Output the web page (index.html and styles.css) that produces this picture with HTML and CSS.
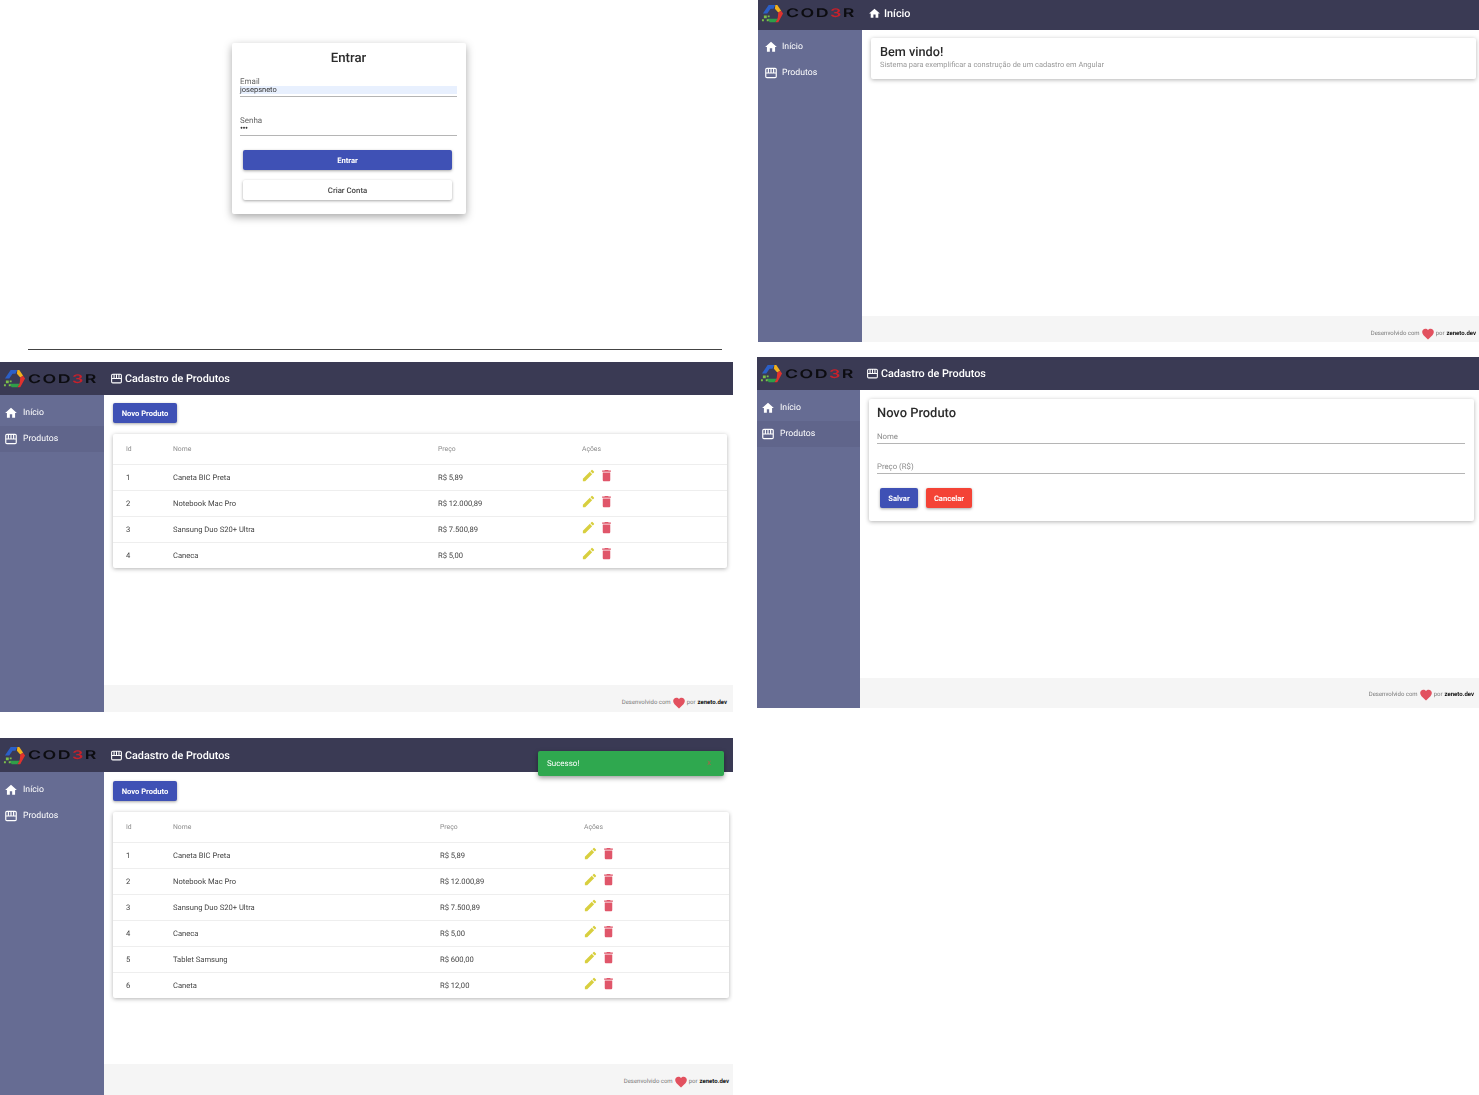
FILE: index.html
```html
<!DOCTYPE html>
<html lang="pt-BR">
<head>
<meta charset="utf-8">
<title>Cadastro de Produtos</title>
<link rel="stylesheet" href="styles.css">
</head>
<body>
<svg class="defs" width="0" height="0" aria-hidden="true">
  <symbol id="i-home" viewBox="0 0 24 24"><path d="M10 20v-6h4v6h5v-8h3L12 3 2 12h3v8z"/></symbol>
  <symbol id="i-store" viewBox="0 0 24 24"><path fill-rule="evenodd" d="M5 3h14a3 3 0 0 1 3 3v12a3 3 0 0 1-3 3H5a3 3 0 0 1-3-3V6a3 3 0 0 1 3-3z M4 13v5a1 1 0 0 0 1 1h14a1 1 0 0 0 1-1v-5z M4 11h2.500V5H5a1 1 0 0 0-1 1z M8.500 11H11V5H8.500z M13 11h2.500V5H13z M17.500 11H20V6a1 1 0 0 0-1-1h-1.500z"/></symbol>
  <symbol id="i-edit" viewBox="0 0 24 24"><path d="M3 17.250V21h3.750L17.810 9.940l-3.750-3.750zM20.710 7.040a1 1 0 0 0 0-1.410l-2.340-2.340a1 1 0 0 0-1.410 0l-1.830 1.830 3.750 3.750z"/></symbol>
  <symbol id="i-trash" viewBox="0 0 24 24"><path d="M6 19c0 1.100.9 2 2 2h8c1.100 0 2-.9 2-2V7H6zM19 4h-3.500l-1-1h-5l-1 1H5v2h14z"/></symbol>
  <symbol id="i-heart" viewBox="0 0 24 24"><path d="M12 21.350l-1.450-1.320C5.400 15.360 2 12.280 2 8.500 2 5.420 4.420 3 7.500 3c1.740 0 3.410.810 4.500 2.090C13.090 3.810 14.760 3 16.500 3 19.580 3 22 5.420 22 8.500c0 3.780-3.400 6.860-8.550 11.540z"/></symbol>
  <symbol id="i-logo" viewBox="0 0 24 24">
    <path fill="#2b5fc7" d="M2 12 8 3h7l-2 4H10l-3.500 5z"/>
    <path fill="#f2b21c" d="M15 3h2l4 6-3 2-3.500-4z"/>
    <path fill="#e0322e" d="M21 9l2 3-5 9h-3l2.500-4.500L18 11z"/>
    <path fill="#2f9e48" d="M15 21H9l-2-3.500h10.500z"/>
    <path fill="#7cc04a" d="M3 14h3v3H3zM6 18h2v2H6zM1 18h2v2H1zM7 14h2v2H7z"/>
  </symbol>
</svg>

<main class="canvas">
  <section class="login-panel">
    <div class="login-card">
      <h1 class="login-title">Entrar</h1>
      <div class="field field-filled"><span class="field-label">Email</span><span class="field-value field-autofill">josepsneto</span></div>
      <div class="field field-filled field-gap"><span class="field-label">Senha</span><span class="field-value field-dots">•••</span></div>
      <button class="btn btn-primary btn-wide">Entrar</button>
      <button class="btn btn-white btn-wide">Criar Conta</button>
    </div>
  </section>

  <hr class="rule">

  <section class="app app-home">
    <header class="topbar topbar-home">
      <a class="logo"><svg class="logo-mark"><use href="#i-logo"/></svg><span class="logo-text">COD<b>3</b>R</span></a>
      <h2 class="top-title"><svg class="ic-top"><use href="#i-home"/></svg>Início</h2>
    </header>
    <div class="app-body">
      <nav class="side side-home"><a class="side-link"><svg class="ic-side"><use href="#i-home"/></svg>Início</a><a class="side-link"><svg class="ic-side"><use href="#i-store"/></svg>Produtos</a></nav>
      <div class="content">
        <div class="main">
          <div class="card welcome"><h3 class="welcome-title">Bem vindo!</h3><p class="welcome-sub">Sistema para exemplificar a construção de um cadastro em Angular</p></div>
        </div>
        <footer class="foot">Desenvolvido com <svg class="heart"><use href="#i-heart"/></svg> por <strong>zeneto.dev</strong></footer>
      </div>
    </div>
  </section>

  <section class="app app-list1">
    <header class="topbar">
      <a class="logo"><svg class="logo-mark"><use href="#i-logo"/></svg><span class="logo-text">COD<b>3</b>R</span></a>
      <h2 class="top-title"><svg class="ic-top"><use href="#i-store"/></svg>Cadastro de Produtos</h2>
    </header>
    <div class="app-body">
      <nav class="side"><a class="side-link"><svg class="ic-side"><use href="#i-home"/></svg>Início</a><a class="side-link side-active"><svg class="ic-side"><use href="#i-store"/></svg>Produtos</a></nav>
      <div class="content">
        <div class="main">
          <button class="btn btn-primary btn-new">Novo Produto</button>
          <div class="card table-card">
            <div class="row row-head"><span>Id</span><span>Nome</span><span>Preço</span><span>Ações</span></div>
            <div class="row"><span>1</span><span>Caneta BIC Preta</span><span>R$ 5,89</span><span class="acts"><svg class="ic-edit"><use href="#i-edit"/></svg><svg class="ic-trash"><use href="#i-trash"/></svg></span></div>
            <div class="row"><span>2</span><span>Notebook Mac Pro</span><span>R$ 12.000,89</span><span class="acts"><svg class="ic-edit"><use href="#i-edit"/></svg><svg class="ic-trash"><use href="#i-trash"/></svg></span></div>
            <div class="row"><span>3</span><span>Sansung Duo S20+ Ultra</span><span>R$ 7.500,89</span><span class="acts"><svg class="ic-edit"><use href="#i-edit"/></svg><svg class="ic-trash"><use href="#i-trash"/></svg></span></div>
            <div class="row"><span>4</span><span>Caneca</span><span>R$ 5,00</span><span class="acts"><svg class="ic-edit"><use href="#i-edit"/></svg><svg class="ic-trash"><use href="#i-trash"/></svg></span></div>
          </div>
        </div>
        <footer class="foot">Desenvolvido com <svg class="heart"><use href="#i-heart"/></svg> por <strong>zeneto.dev</strong></footer>
      </div>
    </div>
  </section>

  <section class="app app-form">
    <header class="topbar">
      <a class="logo"><svg class="logo-mark"><use href="#i-logo"/></svg><span class="logo-text">COD<b>3</b>R</span></a>
      <h2 class="top-title"><svg class="ic-top"><use href="#i-store"/></svg>Cadastro de Produtos</h2>
    </header>
    <div class="app-body">
      <nav class="side side-form"><a class="side-link"><svg class="ic-side"><use href="#i-home"/></svg>Início</a><a class="side-link side-active"><svg class="ic-side"><use href="#i-store"/></svg>Produtos</a></nav>
      <div class="content">
        <div class="main">
          <div class="card form-card">
            <h3 class="form-title">Novo Produto</h3>
            <div class="field form-field"><span class="placeholder">Nome</span></div>
            <div class="field form-field form-field-2"><span class="placeholder">Preço (R$)</span></div>
            <div class="form-actions"><button class="btn btn-primary btn-save">Salvar</button><button class="btn btn-red btn-cancel">Cancelar</button></div>
          </div>
        </div>
        <footer class="foot">Desenvolvido com <svg class="heart"><use href="#i-heart"/></svg> por <strong>zeneto.dev</strong></footer>
      </div>
    </div>
  </section>

  <section class="app app-list2">
    <header class="topbar">
      <a class="logo"><svg class="logo-mark"><use href="#i-logo"/></svg><span class="logo-text">COD<b>3</b>R</span></a>
      <h2 class="top-title"><svg class="ic-top"><use href="#i-store"/></svg>Cadastro de Produtos</h2>
    </header>
    <div class="app-body">
      <nav class="side"><a class="side-link"><svg class="ic-side"><use href="#i-home"/></svg>Início</a><a class="side-link"><svg class="ic-side"><use href="#i-store"/></svg>Produtos</a></nav>
      <div class="content">
        <div class="main">
          <button class="btn btn-primary btn-new">Novo Produto</button>
          <div class="card table-card">
            <div class="row row-head"><span>Id</span><span>Nome</span><span>Preço</span><span>Ações</span></div>
            <div class="row"><span>1</span><span>Caneta BIC Preta</span><span>R$ 5,89</span><span class="acts"><svg class="ic-edit"><use href="#i-edit"/></svg><svg class="ic-trash"><use href="#i-trash"/></svg></span></div>
            <div class="row"><span>2</span><span>Notebook Mac Pro</span><span>R$ 12.000,89</span><span class="acts"><svg class="ic-edit"><use href="#i-edit"/></svg><svg class="ic-trash"><use href="#i-trash"/></svg></span></div>
            <div class="row"><span>3</span><span>Sansung Duo S20+ Ultra</span><span>R$ 7.500,89</span><span class="acts"><svg class="ic-edit"><use href="#i-edit"/></svg><svg class="ic-trash"><use href="#i-trash"/></svg></span></div>
            <div class="row"><span>4</span><span>Caneca</span><span>R$ 5,00</span><span class="acts"><svg class="ic-edit"><use href="#i-edit"/></svg><svg class="ic-trash"><use href="#i-trash"/></svg></span></div>
            <div class="row"><span>5</span><span>Tablet Samsung</span><span>R$ 600,00</span><span class="acts"><svg class="ic-edit"><use href="#i-edit"/></svg><svg class="ic-trash"><use href="#i-trash"/></svg></span></div>
            <div class="row"><span>6</span><span>Caneta</span><span>R$ 12,00</span><span class="acts"><svg class="ic-edit"><use href="#i-edit"/></svg><svg class="ic-trash"><use href="#i-trash"/></svg></span></div>
          </div>
        </div>
        <footer class="foot">Desenvolvido com <svg class="heart"><use href="#i-heart"/></svg> por <strong>zeneto.dev</strong></footer>
      </div>
    </div>
    <div class="toast"><span>Sucesso!</span><span class="toast-x">X</span></div>
  </section>
</main>
</body>
</html>
```

FILE: styles.css
```css
* { box-sizing: border-box; }
html, body { margin: 0; padding: 0; background: #fff; }
body { font-family: Roboto, "Liberation Sans", sans-serif; color: #333; overflow: hidden; text-rendering: geometricPrecision; }
.defs { position: absolute; }
.canvas { position: relative; width: 1479px; height: 1095px; overflow: hidden; filter: blur(.25px); }

/* Panels sit on a free canvas: the collage placement is the content */
.login-panel { position: absolute; left: 232px; top: 43px; width: 234px; }
.rule { position: absolute; left: 28px; top: 349px; width: 694px; margin: 0; border: 0; border-top: 1px solid #444; }
.app { position: absolute; display: flex; flex-direction: column; overflow: hidden; }
.app-home { left: 758px; top: 0; width: 721px; height: 342px; }
.app-list1 { left: 0; top: 362px; width: 733px; height: 350px; }
.app-form { left: 757px; top: 357px; width: 722px; height: 351px; }
.app-list2 { left: 0; top: 738px; width: 733px; height: 357px; }

/* Login */
.login-card { background: #fff; border-radius: 2px; padding: 7px 9px 14px 8px; height: 171px; display: flex; flex-direction: column; box-shadow: 0 3px 8px rgba(0,0,0,.35); }
.login-title { margin: 0; text-align: center; font-size: 13.200px; line-height: 17px; font-weight: 500; color: #2b2b2b; }
.field { display: flex; flex-direction: column; border-bottom: 1px solid #b5b5b5; }
.field-filled { padding-bottom: 2px; margin-top: 11px; }
.field-gap { margin-top: 20px; }
.field-label { font-size: 8px; line-height: 8px; color: #666; }
.field-value { font-size: 7.500px; line-height: 8px; color: #333; }
.field-autofill { background: #e8f0fe; }
.field-dots { font-size: 9px; letter-spacing: -.5px; }
.btn { font-family: inherit; text-rendering: inherit; border: 0; border-radius: 2px; font-weight: 700; font-size: 7.600px; padding: 0; cursor: pointer; box-shadow: 0 1px 3px rgba(0,0,0,.35); }
.btn-primary { background: #3f51b5; color: #fff; }
.btn-white { background: #fff; color: #444; font-weight: 500; font-size: 7.800px; }
.btn-red { background: #f44336; color: #fff; }
.btn-wide { width: 209px; height: 20px; margin-left: 3px; margin-top: 14px; }
.btn-white.btn-wide { margin-top: 10px; }

/* App shell */
.topbar { flex: none; height: 33px; background: #3a3a54; display: flex; align-items: center; padding-left: 5px; }
.topbar-home { height: 30px; padding-bottom: 4px; }
.app-list2 .topbar { height: 34px; }
.logo { display: flex; align-items: center; width: 105px; flex: none; }
.logo-mark { width: 23px; height: 23px; flex: none; margin-left: -2px; }
.logo-text { font-family: Inter, "Liberation Sans", sans-serif; font-size: 12px; line-height: 12px; letter-spacing: 1px; color: #0c0c10; font-weight: 600; margin-left: 2px; transform: scaleX(1.48); transform-origin: left; }
.logo-text b { color: #c8202a; font-weight: 600; }
.top-title { margin: 0; display: flex; align-items: center; color: #fff; font-size: 10.800px; font-weight: 500; }
.app-form .top-title { margin-left: -1px; }
.ic-top { width: 13px; height: 13px; fill: #fff; margin-right: 2px; }
.topbar-home .ic-top { margin-right: 3px; }
.app-body { flex: 1; display: flex; min-height: 0; }
.side { flex: none; width: 104px; background: #666c93; padding-top: 5px; display: flex; flex-direction: column; }
.side-form { width: 103px; }
.side-home { padding-top: 4px; }
.side-home .side-link { padding-left: 6px; }
.side-home .ic-side { margin-right: 4px; }
.side-link { height: 26px; display: flex; align-items: center; padding-left: 4px; color: #fff; font-size: 8.700px; }
.side-active { background: #60658b; }
.ic-side { width: 14px; height: 14px; fill: #fff; margin-right: 5px; }
.content { flex: 1; display: flex; flex-direction: column; min-width: 0; }
.main { flex: 1; padding: 8px 6px 0 9px; min-height: 0; }
.app-home .main { padding: 9px 3px 0 9px; }
.app-form .main { padding: 9px 5px 0 9px; }
.app-list2 .main { padding: 9px 4px 0 9px; }
.foot { flex: none; height: 27px; background: #f5f5f5; display: flex; align-items: flex-start; justify-content: flex-end; padding: 11px 6px 0 0; font-size: 6px; line-height: 13px; color: #777; }
.app-home .foot { height: 26px; padding-right: 3px; }
.app-form .foot { height: 30px; padding-right: 5px; padding-top: 10px; }
.app-list2 .foot { height: 31px; padding-right: 4px; }
.foot strong { color: #111; font-weight: 700; margin-left: 2px; }
.heart { width: 14px; height: 14px; fill: #e2515f; margin: 0 1px; }

.card { background: #fff; border-radius: 2px; box-shadow: 0 1px 4px rgba(0,0,0,.3); }
.welcome { padding: 7px 9px; height: 41px; margin-top: -1px; }
.welcome-title { margin: 0; font-size: 12.700px; line-height: 15px; font-weight: 500; color: #2b2b2b; }
.welcome-sub { margin: 0; font-size: 7.450px; line-height: 9px; color: #999; }

/* Table */
.btn-new { width: 64px; height: 20px; display: block; }
.table-card { margin-top: 11px; }
.row { display: grid; grid-template-columns: 47px 265px 144px 1fr; padding-left: 13px; height: 26px; align-items: center; font-size: 7.600px; color: #444; border-top: 1px solid #eee; }
.app-list2 .row { grid-template-columns: 47px 267px 144px 1fr; }
.row-head { height: 30px; border-top: 0; color: #8a8a8a; font-size: 6.800px; }
.acts { display: flex; align-items: center; margin-bottom: 4px; }
.ic-edit { width: 15px; height: 15px; fill: #d8cf3f; margin-left: -1px; }
.ic-trash { width: 15px; height: 15px; fill: #e0566a; margin-left: 3px; }

/* Form */
.form-card { height: 122px; padding: 7px 9px 6px 8px; }
.form-title { margin: 0; font-size: 12.900px; line-height: 16px; font-weight: 500; color: #2b2b2b; }
.form-field { height: 14px; margin-top: 8px; padding-top: 1px; border-bottom: 1px solid #b5b5b5; }
.form-field-2 { margin-top: 16px; }
.placeholder { font-size: 7.800px; line-height: 12px; color: #8a8a8a; }
.form-actions { display: flex; gap: 8px; margin: 14px 0 0 3px; }
.btn-save { width: 38px; height: 20px; }
.btn-cancel { width: 46px; height: 20px; }

/* Toast */
.toast { position: absolute; left: 538px; top: 13px; width: 186px; height: 25px; background: #2fa84f; color: #fff; font-size: 8px; border-radius: 2px; display: flex; align-items: center; justify-content: space-between; padding: 0 13px 0 9px; box-shadow: 0 2px 5px rgba(0,0,0,.4); }
.toast-x { color: #c2564a; font-size: 6px; }
```
